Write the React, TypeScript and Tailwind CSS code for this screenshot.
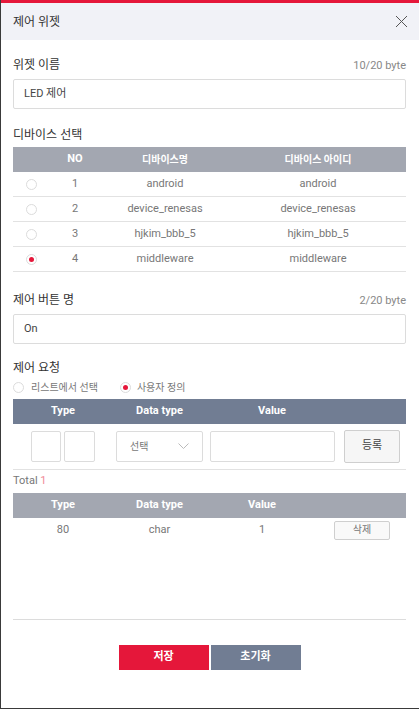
import { useState } from "react";

interface Device {
  no: number;
  name: string;
  id: string;
}

const DEVICES: Device[] = [
  { no: 1, name: "android", id: "android" },
  { no: 2, name: "device_renesas", id: "device_renesas" },
  { no: 3, name: "hjkim_bbb_5", id: "hjkim_bbb_5" },
  { no: 4, name: "middleware", id: "middleware" },
];

const FONT = { fontFamily: 'Roboto, "Noto Sans CJK KR", sans-serif' };

function Radio({ checked }: { checked: boolean }) {
  return (
    <span className="inline-flex w-[11px] h-[11px] rounded-full border border-[#dcdcdc] bg-white items-center justify-center shrink-0">
      {checked && <span className="w-[5px] h-[5px] rounded-full bg-[#e5173a]" />}
    </span>
  );
}

export default function App() {
  const [selected, setSelected] = useState(4);
  const [mode, setMode] = useState<"list" | "custom">("custom");

  return (
    <div style={FONT} className="w-[419px] h-[709px] bg-white border-l border-b border-[#3a3a3a] flex flex-col text-[#333]">
      <div className="h-[3px] bg-[#e5173a] shrink-0" />
      {/* header */}
      <div className="h-[37px] bg-[#f1f2f7] flex items-center justify-between pl-[12px] pr-[11px] shrink-0">
        <h1 className="text-[12px] text-[#333]">제어 위젯</h1>
        <svg width="13" height="13" viewBox="0 0 13 13" className="text-[#555]">
          <path d="M1 1 L12 12 M12 1 L1 12" stroke="currentColor" strokeWidth="1" fill="none" />
        </svg>
      </div>

      <div className="flex-1 flex flex-col pl-[12px] pr-[13px]">
        {/* widget name */}
        <div className="flex items-end justify-between mt-[17px] h-[16px]">
          <span className="text-[12px] leading-[16px]">위젯 이름</span>
          <span className="text-[11px] leading-[14px] text-[#888]">10/20 byte</span>
        </div>
        <div className="mt-[6px] h-[30px] border border-[#dcdcdc] rounded-[2px] flex items-center px-[10px] text-[11px] text-[#444]">
          LED 제어
        </div>

        {/* device select */}
        <div className="mt-[18px] h-[16px] text-[12px] leading-[16px]">디바이스 선택</div>
        <div className="mt-[4px]">
          <div className="h-[25px] bg-[#a3a7b1] flex items-center text-white text-[10px] font-bold">
            <div className="w-[37px]" />
            <div className="w-[50px] text-center text-[11px]">NO</div>
            <div className="w-[130px] text-center">디바이스명</div>
            <div className="flex-1 text-center">디바이스 아이디</div>
          </div>
          {DEVICES.map(d => (
            <div key={d.no} onClick={() => setSelected(d.no)} className="h-[25px] border-b border-[#e2e2e2] flex items-center text-[11px] text-[#777] cursor-pointer">
              <div className="w-[37px] flex justify-center">
                <Radio checked={selected === d.no} />
              </div>
              <div className="w-[50px] text-center">{d.no}</div>
              <div className="w-[130px] text-center">{d.name}</div>
              <div className="flex-1 text-center">{d.id}</div>
            </div>
          ))}
        </div>

        {/* button name */}
        <div className="flex items-end justify-between mt-[20px] h-[16px]">
          <span className="text-[12px] leading-[16px]">제어 버튼 명</span>
          <span className="text-[11px] leading-[14px] text-[#888]">2/20 byte</span>
        </div>
        <div className="mt-[6px] h-[30px] border border-[#dcdcdc] rounded-[2px] flex items-center px-[10px] text-[11px] text-[#444]">
          On
        </div>

        {/* control request */}
        <div className="mt-[16px] h-[16px] text-[12px] leading-[16px]">제어 요청</div>
        <div className="mt-[4px] h-[14px] flex items-center text-[10px] text-[#777]">
          <label className="flex items-center gap-[7px] cursor-pointer" onClick={() => setMode("list")}>
            <Radio checked={mode === "list"} />
            리스트에서 선택
          </label>
          <label className="flex items-center gap-[6px] ml-[22px] cursor-pointer" onClick={() => setMode("custom")}>
            <Radio checked={mode === "custom"} />
            사용자 정의
          </label>
        </div>
        <div className="mt-[5px]">
          <div className="h-[25px] bg-[#717d93] flex items-center text-white text-[11px] font-bold">
            <div className="w-[100px] text-center">Type</div>
            <div className="w-[93px] text-center">Data type</div>
            <div className="w-[132px] text-center">Value</div>
            <div className="flex-1" />
          </div>
          <div className="h-[46px] border-b border-[#e2e2e2] flex items-center">
            <div className="w-[100px] flex justify-center gap-[3px]">
              <div className="w-[30px] h-[31px] border border-[#dcdcdc] rounded-[2px]" />
              <div className="w-[31px] h-[31px] border border-[#dcdcdc] rounded-[2px]" />
            </div>
            <div className="w-[93px] flex justify-center">
              <div className="w-[87px] h-[31px] border border-[#dcdcdc] rounded-[2px] flex items-center justify-between pl-[13px] pr-[13px] text-[10px] text-[#777]">
                선택
                <svg width="11" height="7" viewBox="0 0 11 7">
                  <path d="M0.5 0.5 L5.5 5.5 L10.5 0.5" stroke="#bbb" strokeWidth="1" fill="none" />
                </svg>
              </div>
            </div>
            <div className="w-[132px] flex justify-center">
              <div className="w-[125px] h-[31px] border border-[#dcdcdc] rounded-[2px]" />
            </div>
            <div className="flex-1 flex justify-center">
              <button className="w-[56px] h-[33px] border border-[#cfcfcf] rounded-[2px] bg-[#f6f6f6] text-[11px] text-[#444]">등록</button>
            </div>
          </div>
        </div>

        {/* total */}
        <div className="mt-[4px] h-[14px] text-[11px] leading-[14px] text-[#777]">
          Total <span className="text-[#f08a98]">1</span>
        </div>
        <div className="mt-[5px]">
          <div className="h-[25px] bg-[#a3a7b1] flex items-center text-white text-[11px] font-bold">
            <div className="w-[100px] text-center">Type</div>
            <div className="w-[93px] text-center">Data type</div>
            <div className="w-[112px] text-center">Value</div>
            <div className="flex-1" />
          </div>
          <div className="h-[24px] flex items-center text-[11px] text-[#777]">
            <div className="w-[100px] text-center">80</div>
            <div className="w-[93px] text-center">char</div>
            <div className="w-[112px] text-center">1</div>
            <div className="flex-1 flex justify-center">
              <button className="w-[56px] h-[19px] border border-[#cfcfcf] rounded-[2px] bg-[#f9f9f9] text-[10px] text-[#777] leading-none">삭제</button>
            </div>
          </div>
        </div>

        <div className="flex-1" />
        <div className="border-t border-[#dcdcdc]" />

        {/* actions */}
        <div className="h-[88px] flex justify-center gap-[2px] pt-[25px]">
          <button className="w-[90px] h-[25px] bg-[#e5173a] text-white text-[11px] font-bold">저장</button>
          <button className="w-[90px] h-[25px] bg-[#717d93] text-white text-[11px] font-bold">초기화</button>
        </div>
      </div>
    </div>
  );
}
